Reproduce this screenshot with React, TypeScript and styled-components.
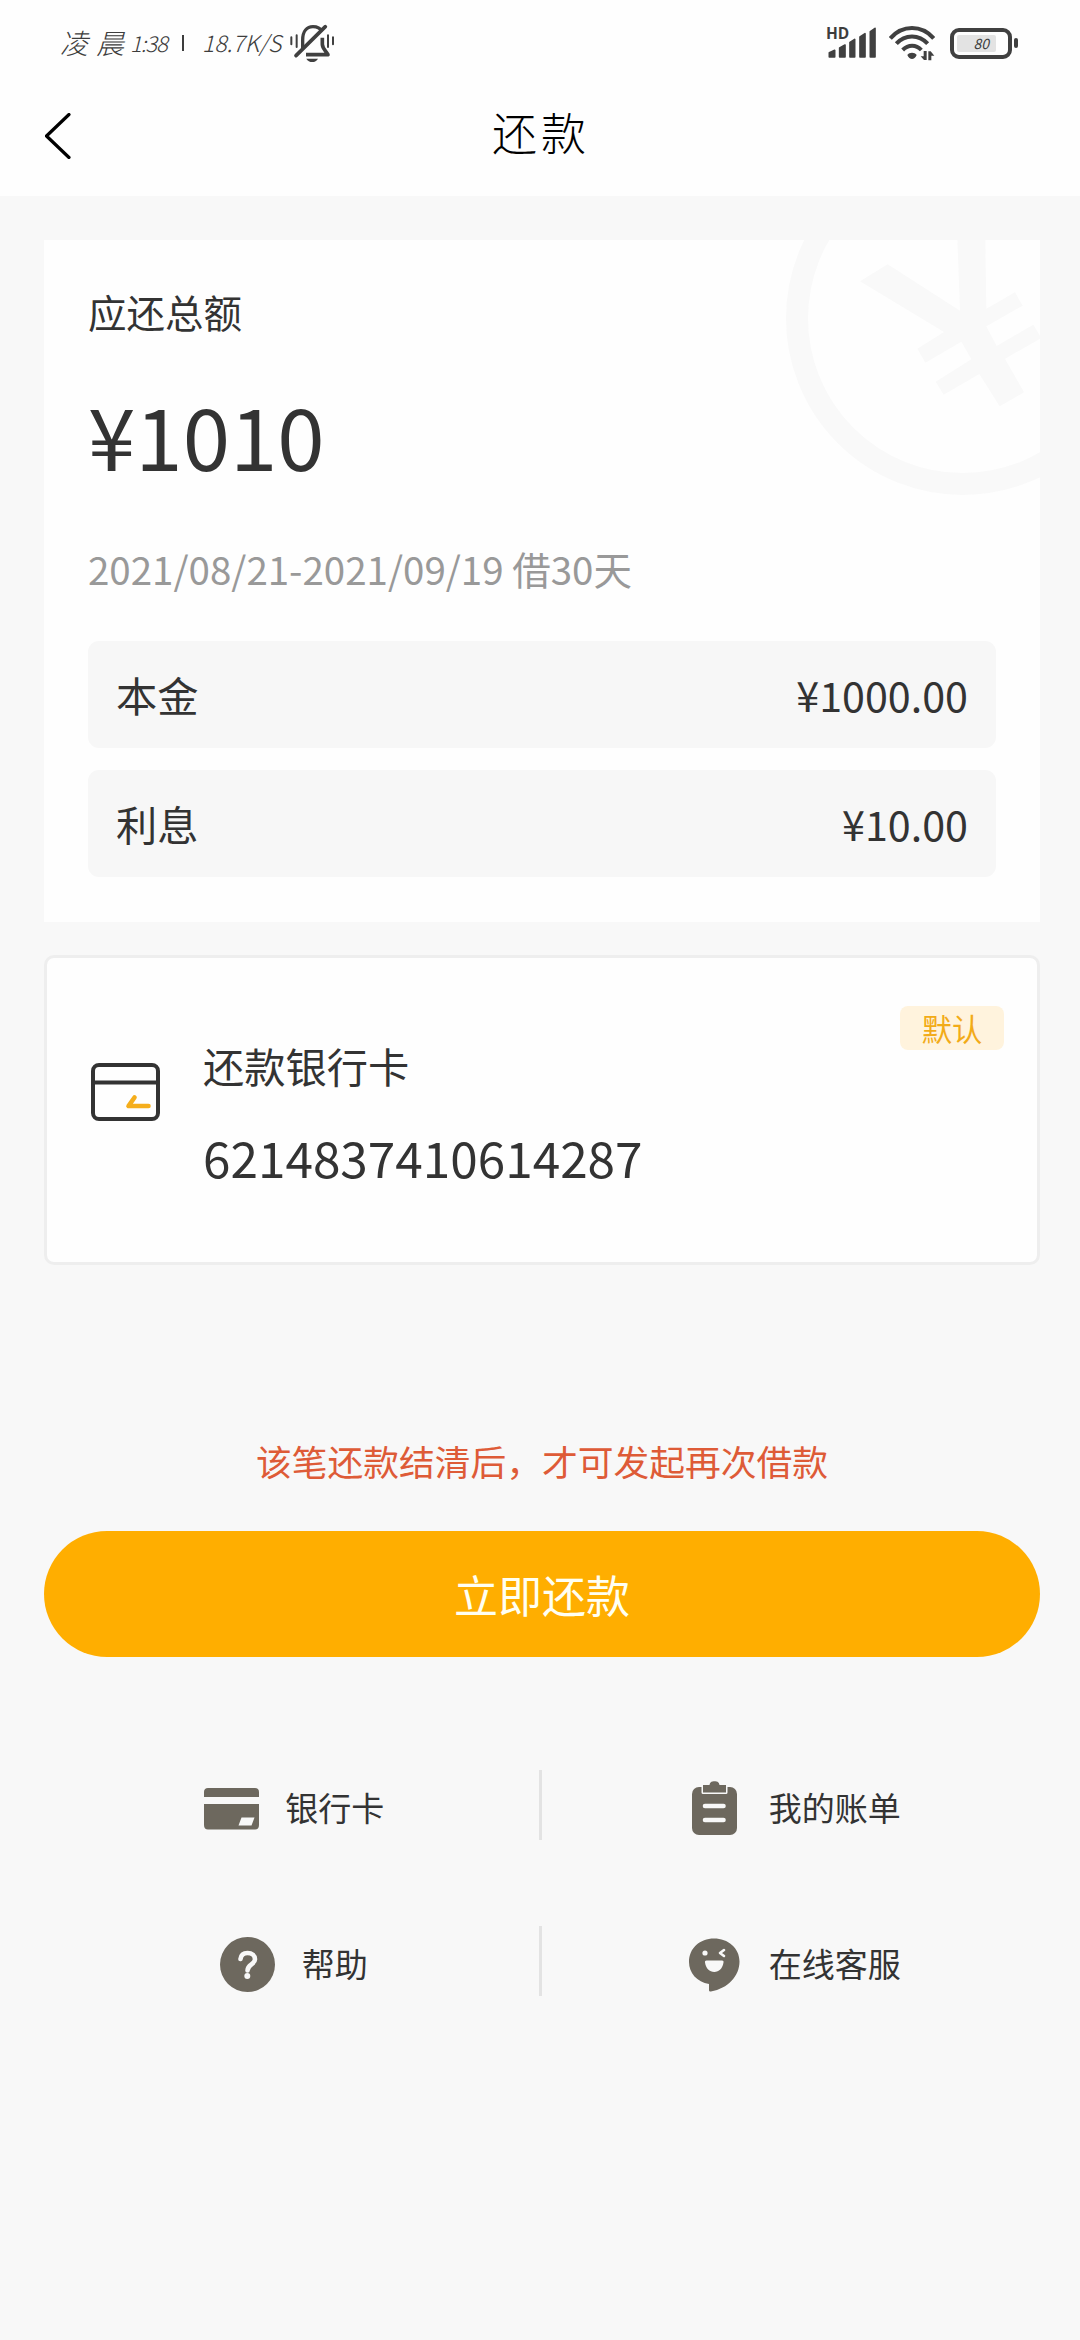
import React from "react";
import styled, { createGlobalStyle } from "styled-components";

const Global = createGlobalStyle`
  * { box-sizing: border-box; }
  body {
    margin: 0;
    background: #f8f8f8;
    color: #333;
    font-family: "Noto Sans CJK SC", "Noto Sans", sans-serif;
  }
  svg { display: block; flex: none; }
`;

const Screen = styled.div`
  width: 1080px;
  height: 2340px;
  background: #f8f8f8;
  overflow: hidden;
`;

const Top = styled.header`
  height: 196px;
  background: #fefefe;
`;

const StatusBar = styled.div`
  height: 86px;
  display: flex;
  align-items: center;
  justify-content: space-between;
  padding: 0 62px 0 60px;
  color: #3d3d3d;
`;

const StatusGroup = styled.div`
  display: flex;
  align-items: center;
`;

const StatusText = styled.span<{ $size: number; $width: number; $track?: number }>`
  width: ${(p) => p.$width}px;
  font-size: ${(p) => p.$size}px;
  font-weight: 300;
  font-style: italic;
  line-height: 40px;
  letter-spacing: ${(p) => p.$track ?? 0}px;
  margin-top: -3px;
  white-space: nowrap;
`;

const StatusRule = styled.span`
  width: 2px;
  height: 16px;
  margin-right: 18px;
  background: #3d3d3d;
`;

const Signal = styled.div`
  position: relative;
  width: 51px;
  height: 34px;
  margin-right: 12px;
`;

const HdMark = styled.span`
  position: absolute;
  left: 0;
  top: 0;
  font: 700 15.5px/15px "Open Sans", sans-serif;
`;

const Battery = styled.div`
  width: 62px;
  height: 31px;
  margin-left: 15px;
  padding: 3px;
  border: 4px solid #404040;
  border-radius: 9px;
`;

const BatteryLevel = styled.div`
  width: 39px;
  height: 17px;
  border-radius: 2px;
  background: #e3e3e3;
  font-size: 14px;
  font-style: italic;
  line-height: 16px;
  text-align: right;
  padding-right: 7px;
`;

const BatteryTip = styled.span`
  width: 4px;
  height: 10px;
  margin-left: 2px;
  border-radius: 2px;
  background: #404040;
`;

const NavBar = styled.nav`
  height: 100px;
  display: grid;
  grid-template-columns: 120px 1fr 120px;
  align-items: center;
  padding-left: 2px;
`;

const BackButton = styled.button`
  padding: 0 0 0 43px;
  border: 0;
  background: none;
`;

const NavTitle = styled.h1`
  margin: 0 0 8px;
  font-size: 45px;
  font-weight: 300;
  line-height: 64px;
  letter-spacing: 4px;
  text-align: center;
  color: #000;
`;

const Main = styled.main`
  padding: 44px 40px 0 44px;
`;

const Summary = styled.section`
  position: relative;
  height: 682px;
  padding: 44px;
  background: #fefefe;
  overflow: hidden;
`;

const Watermark = styled.svg`
  position: absolute;
  left: 696px;
  top: -20px;
`;

const SummaryLabel = styled.div`
  font-size: 38.5px;
  line-height: 54px;
`;

const Amount = styled.div`
  margin-top: 36px;
  font-size: 85.25px;
  line-height: 120px;
`;

const Period = styled.div`
  margin: 47px 0 46px;
  font-size: 38.5px;
  line-height: 54px;
  color: #999;
`;

const Lines = styled.div`
  display: grid;
  gap: 22px;
`;

const Line = styled.div`
  display: flex;
  justify-content: space-between;
  height: 107px;
  padding: 0 28px;
  border-radius: 11px;
  background: #f7f7f7;
  font-size: 41.25px;
  line-height: 107px;
`;

const BankCard = styled.section`
  display: flex;
  height: 310px;
  margin-top: 33px;
  padding: 0 33px 0 44px;
  border: 3px solid #eee;
  border-radius: 10px;
  background: #fefefe;
`;

const BankIcon = styled.svg`
  margin: 105px 43px 0 0;
`;

const BankInfo = styled.div`
  flex: 1;
  padding-top: 78px;
`;

const BankTitle = styled.div`
  font-size: 41.25px;
  line-height: 58px;
`;

const BankNumber = styled.div`
  margin-top: 28px;
  font-size: 49.5px;
  line-height: 70px;
`;

const Badge = styled.span`
  width: 104px;
  height: 44px;
  margin-top: 48px;
  border-radius: 8px;
  background: #fff3dd;
  color: #f2ab18;
  font-size: 30.25px;
  line-height: 45px;
  text-align: center;
`;

const Notice = styled.p`
  margin: 171px 0 0;
  font-size: 35.75px;
  line-height: 50px;
  text-align: center;
  color: #de5b37;
`;

const PayButton = styled.button`
  display: block;
  width: 100%;
  height: 126px;
  margin-top: 45px;
  padding: 0;
  border: 0;
  border-radius: 63px;
  background: #ffae00;
  color: #fffff2;
  font: 400 44px/126px "Noto Sans CJK SC", sans-serif;
`;

const Menu = styled.div`
  display: grid;
  grid-template-columns: 496px 500px;
  row-gap: 86px;
  margin: 113px -2px 0 2px;
`;

const MenuItem = styled.a<{ $divided?: boolean }>`
  display: flex;
  align-items: center;
  justify-content: center;
  gap: 26.5px;
  height: 70px;
  padding: 7px 0 0 ${(p) => (p.$divided ? 3 : 4)}px;
  border-right: ${(p) => (p.$divided ? "3px solid #e3e3e3" : "0")};
  font-size: 33px;
`;

const MenuLabel = styled.span`
  line-height: 48px;
  margin-top: -4px;
`;

const MutedBell = () => (
  <svg width="44" height="38" viewBox="869 76 132 114" fill="none" stroke="#404040">
    <path d="M907 148V124C907 97 920 84 938 84C950 84 960 89 965 98" strokeWidth="10" />
    <path d="M975 84L887 171" strokeWidth="11" strokeLinecap="round" />
    <path d="M966 117V137C966 149 976 156 983 168H917" strokeWidth="11" strokeLinejoin="round" />
    <path d="M873 116V137M889 110V145M983 110V145M998 116V137" strokeWidth="6" strokeLinecap="round" />
    <path d="M918 180H953C949 187 943 190 936 190C928 190 922 187 918 180Z" fill="#404040" stroke="none" />
  </svg>
);

const SignalBars = () => (
  <svg width="51" height="34" viewBox="135 84 153 102" fill="#404040" stroke="#404040" strokeWidth="5" strokeLinejoin="round">
    <path d="M145 164L161 157V177H145ZM176 150L192 141V177H176ZM207 133L221 124V177H207ZM237 117L252 107V177H237ZM268 101L282 91V177H268Z" />
  </svg>
);

const Wifi = () => (
  <svg width="46" height="36" viewBox="323 80 138 108" fill="none" stroke="#404040" strokeWidth="12">
    <path d="M327 120C363 79 421 79 457 120" />
    <path d="M345 136C371 107 413 107 439 136" />
    <path d="M364 155C381 138 404 138 420 155" />
    <path d="M378 170C384 161 400 161 406 170C403 178 397 182 392 182C387 182 381 178 378 170Z" fill="#404040" stroke="none" />
    <path d="M436 158V185H428L418 174H427V158ZM441 186V159H448L459 172H450V186Z" fill="#404040" stroke="none" />
  </svg>
);

const CardIcon = () => (
  <svg width="55" height="55" viewBox="0 0 55 55">
    <path d="M0 16V11C0 8.500 1.500 7 4 7H51C53.500 7 55 8.500 55 11V16Z" fill="#6d685e" />
    <path
      fillRule="evenodd"
      d="M0 23H55V44C55 47 53.500 48.500 51 48.500H4C1.500 48.500 0 47 0 44ZM37.500 36.500L34.500 44.500H47.500L50.500 36.500Z"
      fill="#6d685e"
    />
  </svg>
);

const BillIcon = () => (
  <svg width="55" height="55" viewBox="0 0 55 55">
    <rect x="5" y="6" width="45" height="48" rx="7" fill="#6d685e" />
    <path
      d="M16 4H22.500C23 .8 25 .2 27.500 .2C30 .2 32 .8 32.500 4H39V11.500H16Z"
      fill="#6d685e"
      stroke="#f8f8f8"
      strokeWidth="3"
      strokeLinejoin="round"
      paintOrder="stroke"
    />
    <path d="M18 25H36.500M18 39H36.500" stroke="#f8f8f8" strokeWidth="4.600" strokeLinecap="round" />
  </svg>
);

const HelpIcon = () => (
  <svg width="55" height="55" viewBox="0 0 55 55" fill="none">
    <circle cx="27.500" cy="27.500" r="27.500" fill="#6d685e" />
    <path
      d="M20.500 22C21 18 23.500 16 27.500 16C32 16 35 18.500 35 22.300C35 27.500 27.500 27.500 27.500 33.500"
      stroke="#f8f8f8"
      strokeWidth="4.600"
      strokeLinecap="round"
    />
    <circle cx="27.300" cy="39" r="3" fill="#f8f8f8" />
  </svg>
);

const ServiceIcon = () => (
  <svg width="55" height="55" viewBox="0 0 55 55" fill="none">
    <path
      d="M27 1.500C41 1.500 52.500 11 52.500 24.500C52.500 39 41 51.500 24 54.500C22.500 54.500 22 54 22 53V47C10 45 2 36 2 25C2 11 13 1.500 27 1.500Z"
      fill="#6d685e"
    />
    <path
      d="M19.500 23.500H35C36.300 23.500 36.800 24.300 36.500 25.500C35.500 31.500 32 35 27.300 35C22.500 35 19 31.500 18 25.500C17.800 24.300 18.300 23.500 19.500 23.500Z"
      fill="#f8f8f8"
    />
    <circle cx="18" cy="16" r="2.600" fill="#f8f8f8" />
    <path d="M37 13L33 16L37 19" stroke="#f8f8f8" strokeWidth="2.600" strokeLinecap="round" strokeLinejoin="round" />
  </svg>
);

export default function App() {
  return (
    <>
      <Global />
      <Screen>
        <Top>
          <StatusBar>
            <StatusGroup>
              <StatusText $size={28} $width={70} $track={8}>凌晨</StatusText>
              <StatusText $size={22} $width={52} $track={-1}>1:38</StatusText>
              <StatusRule />
              <StatusText $size={23} $width={88}>18.7K/S</StatusText>
              <MutedBell />
            </StatusGroup>
            <StatusGroup>
              <Signal>
                <SignalBars />
                <HdMark>HD</HdMark>
              </Signal>
              <Wifi />
              <Battery>
                <BatteryLevel>80</BatteryLevel>
              </Battery>
              <BatteryTip />
            </StatusGroup>
          </StatusBar>
          <NavBar>
            <BackButton aria-label="返回">
              <svg width="26" height="46" viewBox="0 0 26 46" fill="none" stroke="#000" strokeWidth="3.200" strokeLinecap="round" strokeLinejoin="round">
                <path d="M24 1.500L1.500 23L24 44.500" />
              </svg>
            </BackButton>
            <NavTitle>还款</NavTitle>
          </NavBar>
        </Top>

        <Main>
          <Summary>
            <Watermark width="340" height="300" viewBox="0 0 1020 900" fill="#f9f9f9">
              <circle cx="668" cy="295" r="497" fill="none" stroke="#f9f9f9" strokeWidth="66" />
              <path d="M443 133L360 184L612 336L532 386L556 428L664 365L694 418L587 485L611 524L718 462L779 559L852 517L795 416L904 354L880 314L770 378L739 319L848 257L825 217L739 266L735 0H650L660 272Z" />
            </Watermark>
            <SummaryLabel>应还总额</SummaryLabel>
            <Amount>¥1010</Amount>
            <Period>2021/08/21-2021/09/19 借30天</Period>
            <Lines>
              <Line>
                <span>本金</span>
                <span>¥1000.00</span>
              </Line>
              <Line>
                <span>利息</span>
                <span>¥10.00</span>
              </Line>
            </Lines>
          </Summary>

          <BankCard>
            <BankIcon width="69" height="58" viewBox="0 0 69 58" fill="none">
              <rect x="2" y="2" width="65" height="54" rx="6" stroke="#333" strokeWidth="4" />
              <path d="M2 19.500H67" stroke="#333" strokeWidth="4" />
              <path d="M43.500 34.500L37.500 43H57.500" stroke="#f5ae1c" strokeWidth="4.600" strokeLinecap="round" strokeLinejoin="round" />
            </BankIcon>
            <BankInfo>
              <BankTitle>还款银行卡</BankTitle>
              <BankNumber>6214837410614287</BankNumber>
            </BankInfo>
            <Badge>默认</Badge>
          </BankCard>

          <Notice>该笔还款结清后，才可发起再次借款</Notice>
          <PayButton>立即还款</PayButton>

          <Menu>
            <MenuItem $divided>
              <CardIcon />
              <MenuLabel>银行卡</MenuLabel>
            </MenuItem>
            <MenuItem>
              <BillIcon />
              <MenuLabel>我的账单</MenuLabel>
            </MenuItem>
            <MenuItem $divided>
              <HelpIcon />
              <MenuLabel>帮助</MenuLabel>
            </MenuItem>
            <MenuItem>
              <ServiceIcon />
              <MenuLabel>在线客服</MenuLabel>
            </MenuItem>
          </Menu>
        </Main>
      </Screen>
    </>
  );
}
